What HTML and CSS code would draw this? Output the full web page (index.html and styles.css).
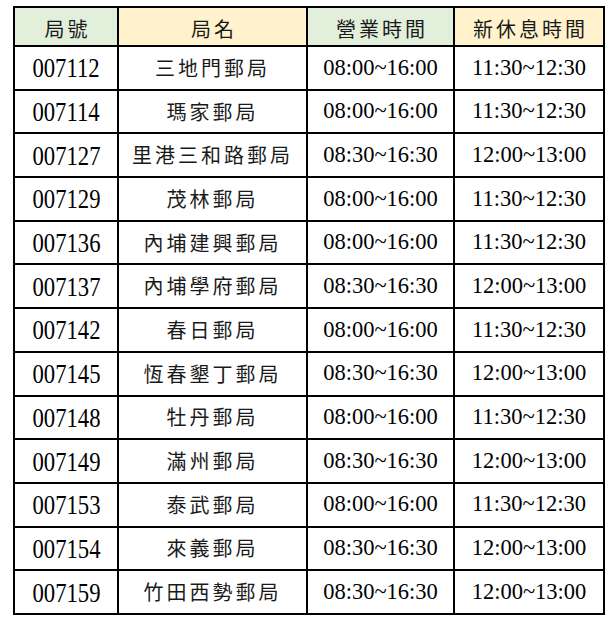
FILE: index.html
```html
<!DOCTYPE html>
<html lang="zh-Hant">
<head>
<meta charset="utf-8">
<title>郵局營業時間</title>
<link rel="stylesheet" href="styles.css">
</head>
<body>
<table class="sched">
  <colgroup>
    <col class="c-id"><col class="c-name"><col class="c-open"><col class="c-rest">
  </colgroup>
  <thead>
    <tr class="head">
      <th class="green">局號</th>
      <th class="cream">局名</th>
      <th class="green">營業時間</th>
      <th class="cream">新休息時間</th>
    </tr>
  </thead>
  <tbody>
    <tr><td class="id"><span>007112</span></td><td class="name">三地門郵局</td><td class="time">08:00~16:00</td><td class="time">11:30~12:30</td></tr>
    <tr><td class="id"><span>007114</span></td><td class="name">瑪家郵局</td><td class="time">08:00~16:00</td><td class="time">11:30~12:30</td></tr>
    <tr><td class="id"><span>007127</span></td><td class="name">里港三和路郵局</td><td class="time">08:30~16:30</td><td class="time">12:00~13:00</td></tr>
    <tr><td class="id"><span>007129</span></td><td class="name">茂林郵局</td><td class="time">08:00~16:00</td><td class="time">11:30~12:30</td></tr>
    <tr><td class="id"><span>007136</span></td><td class="name">內埔建興郵局</td><td class="time">08:00~16:00</td><td class="time">11:30~12:30</td></tr>
    <tr><td class="id"><span>007137</span></td><td class="name">內埔學府郵局</td><td class="time">08:30~16:30</td><td class="time">12:00~13:00</td></tr>
    <tr><td class="id"><span>007142</span></td><td class="name">春日郵局</td><td class="time">08:00~16:00</td><td class="time">11:30~12:30</td></tr>
    <tr><td class="id"><span>007145</span></td><td class="name">恆春墾丁郵局</td><td class="time">08:30~16:30</td><td class="time">12:00~13:00</td></tr>
    <tr><td class="id"><span>007148</span></td><td class="name">牡丹郵局</td><td class="time">08:00~16:00</td><td class="time">11:30~12:30</td></tr>
    <tr><td class="id"><span>007149</span></td><td class="name">滿州郵局</td><td class="time">08:30~16:30</td><td class="time">12:00~13:00</td></tr>
    <tr><td class="id"><span>007153</span></td><td class="name">泰武郵局</td><td class="time">08:00~16:00</td><td class="time">11:30~12:30</td></tr>
    <tr><td class="id"><span>007154</span></td><td class="name">來義郵局</td><td class="time">08:30~16:30</td><td class="time">12:00~13:00</td></tr>
    <tr><td class="id"><span>007159</span></td><td class="name">竹田西勢郵局</td><td class="time">08:30~16:30</td><td class="time">12:00~13:00</td></tr>
  </tbody>
</table>
</body>
</html>
```
FILE: styles.css
```css
html, body {
  margin: 0;
  padding: 0;
  background: #ffffff;
}

body {
  padding: 6px 0 0 13px;
  font-family: "Liberation Serif", "Noto Sans CJK TC", serif;
  color: #000;
}

.sched {
  border-collapse: collapse;
  table-layout: fixed;
  width: 590px;
}

.c-id { width: 104px; }
.c-name { width: 189px; }
.c-open { width: 147px; }
.c-rest { width: 150px; }

.sched th,
.sched td {
  border: 2px solid #000;
  padding: 0;
  text-align: center;
  vertical-align: middle;
}

.head {
  height: 39px;
}

.sched tbody tr {
  height: 43.7px;
}

.sched th {
  font-family: "Noto Sans CJK TC", sans-serif;
  font-weight: 400;
  font-size: 20px;
  letter-spacing: 3px;
  padding-left: 3px;
  padding-top: 5px;
  line-height: 1;
  color: #1a1a1a;
}

.green { background: #e2efda; }
.cream { background: #fff2cc; }

.id span {
  display: inline-block;
  font-size: 27px;
  line-height: 1;
  transform: scaleX(0.84);
  padding-top: 2px;
}

.name {
  font-family: "Noto Sans CJK TC", sans-serif;
  font-size: 20px;
  letter-spacing: 3px;
  padding-left: 3px;
  padding-top: 8px;
  line-height: 1;
  color: #1a1a1a;
}

.time {
  font-size: 22.5px;
  line-height: 1;
}
```
